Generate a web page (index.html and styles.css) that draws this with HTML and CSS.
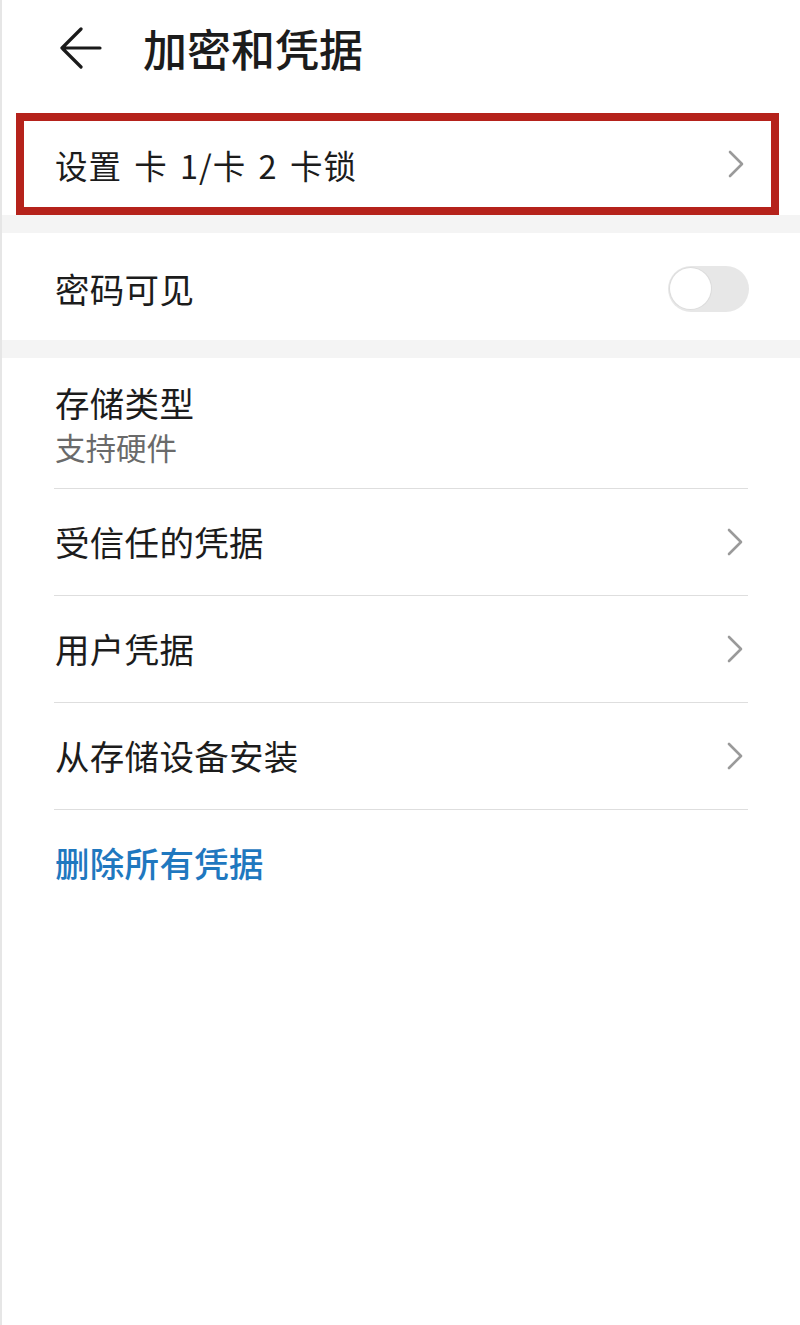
FILE: index.html
```html
<!DOCTYPE html>
<html lang="zh-CN">
<head>
<meta charset="utf-8">
<link rel="stylesheet" href="styles.css">
</head>
<body>
<div class="page">
  <header class="header">
    <svg class="back" width="44" height="44" viewBox="0 0 44 44">
      <path d="M22 2 L3 21 L22 40 M3 21 H41" fill="none" stroke="#1a1a1a" stroke-width="3.2" stroke-linecap="round" stroke-linejoin="round"/>
    </svg>
    <h1 class="title">加密和凭据</h1>
  </header>

  <div class="highlight">
    <div class="row-inner">
      <span class="label card">设置 卡 1/卡 2 卡锁</span>
      <svg class="chev" width="16" height="28" viewBox="0 0 16 28"><path d="M2 2 L14 14 L2 26" fill="none" stroke="#9a9a9a" stroke-width="2.6" stroke-linecap="round" stroke-linejoin="round"/></svg>
    </div>
  </div>

  <div class="band"></div>

  <div class="row single">
    <span class="label">密码可见</span>
    <span class="toggle"><span class="knob"></span></span>
  </div>

  <div class="band"></div>

  <div class="list">
    <div class="item two">
      <span class="label">存储类型</span>
      <span class="sub">支持硬件</span>
    </div>
    <div class="item">
      <span class="label">受信任的凭据</span>
      <svg class="chev" width="16" height="28" viewBox="0 0 16 28"><path d="M2 2 L14 14 L2 26" fill="none" stroke="#9a9a9a" stroke-width="2.6" stroke-linecap="round" stroke-linejoin="round"/></svg>
    </div>
    <div class="item">
      <span class="label">用户凭据</span>
      <svg class="chev" width="16" height="28" viewBox="0 0 16 28"><path d="M2 2 L14 14 L2 26" fill="none" stroke="#9a9a9a" stroke-width="2.6" stroke-linecap="round" stroke-linejoin="round"/></svg>
    </div>
    <div class="item">
      <span class="label">从存储设备安装</span>
      <svg class="chev" width="16" height="28" viewBox="0 0 16 28"><path d="M2 2 L14 14 L2 26" fill="none" stroke="#9a9a9a" stroke-width="2.6" stroke-linecap="round" stroke-linejoin="round"/></svg>
    </div>
    <div class="item last">
      <span class="label link">删除所有凭据</span>
    </div>
  </div>
</div>
</body>
</html>
```

FILE: styles.css
```css
html, body {
  margin: 0;
  padding: 0;
  background: #ffffff;
}
body {
  font-family: "Noto Sans CJK SC", "Noto Sans", sans-serif;
  color: #1c1c1c;
}
.page {
  width: 800px;
  min-height: 1325px;
  box-sizing: border-box;
  border-left: 2px solid #e6e6e6;
  background: #fff;
}
.header {
  height: 96px;
  display: flex;
  align-items: center;
  padding-left: 57px;
}
.back {
  display: block;
  margin-top: 2px;
}
.title {
  margin: 0 0 0 40px;
  font-size: 44px;
  font-weight: 500;
  line-height: 1;
  color: #1c1c1c;
}
.highlight {
  margin: 17px 21px 0 14px;
  height: 102px;
  box-sizing: border-box;
  border: 8px solid #b5221b;
}
.row-inner {
  height: 100%;
  display: flex;
  align-items: center;
  justify-content: space-between;
  padding: 0 27px 0 31px;
}
.label {
  font-size: 31px;
  line-height: 1.2;
  letter-spacing: 0.3px;
}
.label.card {
  font-size: 32.5px;
  letter-spacing: 1px;
  word-spacing: 4px;
}
.band {
  height: 18px;
  background: #f4f4f4;
}
.row.single {
  height: 107px;
  display: flex;
  align-items: center;
  justify-content: space-between;
  padding: 4px 51px 0 53px;
  box-sizing: border-box;
}
.row.single .label,
.item .label {
  font-size: 34.5px;
}
.toggle {
  width: 81px;
  height: 46px;
  border-radius: 23px;
  background: #e7e7e7;
  display: flex;
  align-items: center;
  padding-left: 2px;
  box-sizing: border-box;
}
.knob {
  width: 41px;
  height: 41px;
  border-radius: 50%;
  background: #fff;
  box-shadow: 0 0 0 1px #dcdcdc;
}
.list {
  margin: 0 52px 0 52px;
}
.item {
  height: 106px;
  border-bottom: 1px solid #dedede;
  display: flex;
  align-items: center;
  justify-content: space-between;
  padding: 0 5px 0 1px;
}
.item.two {
  height: 131px;
  flex-direction: column;
  align-items: flex-start;
  justify-content: center;
  padding-top: 4px;
  box-sizing: border-box;
}
.item.two .label {
  line-height: 1.3;
}
.sub {
  font-size: 30.5px;
  color: #6a6a6a;
  line-height: 1.5;
}
.item.last {
  border-bottom: none;
}
.label.link {
  color: #1f78bf;
  font-weight: 500;
}
.chev {
  display: block;
}
```
